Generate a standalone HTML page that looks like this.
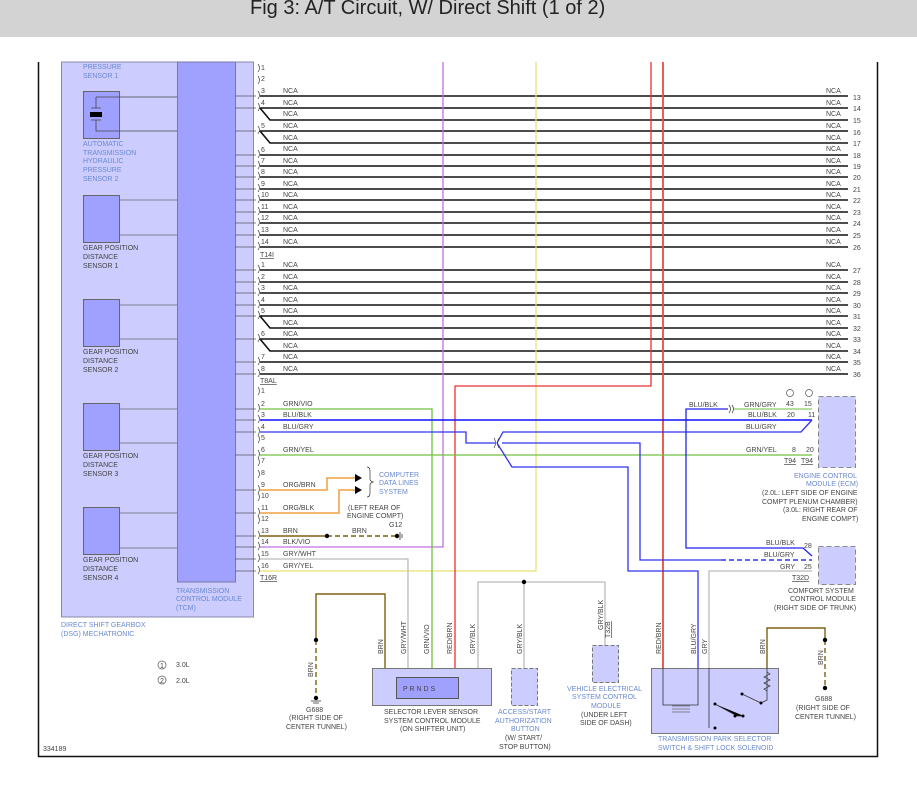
<!DOCTYPE html>
<html><head><meta charset="utf-8"><style>
html,body{margin:0;padding:0;background:#fff;}
body{width:917px;height:792px;overflow:hidden;position:relative;font-family:"Liberation Sans",sans-serif;}
#hdr{position:absolute;left:0;top:0;width:917px;height:37px;background:#d3d3d3;}
#hdr span{position:absolute;left:250px;top:-3px;font-size:20px;color:#222;}
svg{position:absolute;left:0;top:0;}
text{font-family:"Liberation Sans",sans-serif;font-size:7px;fill:#444;}
.b{fill:#6a8ad0;}
.p{fill:#777;font-size:7px;}
</style></head><body>
<div id="hdr"><span>Fig 3: A/T Circuit, W/ Direct Shift (1 of 2)</span></div>
<svg width="917" height="792" viewBox="0 0 917 792">
<!-- frame -->
<path d="M38.5 62 V756.5 H877.5 V62" fill="none" stroke="#111" stroke-width="1.5"/>
<!-- left panel -->
<rect x="61.5" y="62" width="192" height="555" fill="#ccccff" stroke="#8888aa"/>
<rect x="177.5" y="62" width="58" height="520" fill="#a0a0ff" stroke="#7777aa"/>
<line x1="253.5" y1="62" x2="253.5" y2="617" stroke="#8888aa"/>
<!-- sensors -->
<rect x="83.5" y="91.5" width="36" height="47" fill="#a0a0ff" stroke="#666"/>
<path d="M96 97 H177 M96 97 V108 M91 108 H101 M91 120 H101 M96 120 V131 H177" stroke="#444" fill="none" stroke-width="0.8"/>
<rect x="90" y="112" width="12" height="5" fill="#000"/>
<rect x="83.5" y="195.5" width="36" height="47" fill="#a0a0ff" stroke="#666"/>
<rect x="83.5" y="299.5" width="36" height="47" fill="#a0a0ff" stroke="#666"/>
<rect x="83.5" y="403.5" width="36" height="47" fill="#a0a0ff" stroke="#666"/>
<rect x="83.5" y="507.5" width="36" height="47" fill="#a0a0ff" stroke="#666"/>
<g stroke="#666" stroke-width="0.8">
<line x1="119" y1="200" x2="177" y2="200"/><line x1="119" y1="235" x2="177" y2="235"/>
<line x1="119" y1="305" x2="177" y2="305"/><line x1="119" y1="339" x2="177" y2="339"/>
<line x1="119" y1="409" x2="177" y2="409"/><line x1="119" y1="443" x2="177" y2="443"/>
<line x1="119" y1="513" x2="177" y2="513"/><line x1="119" y1="548" x2="177" y2="548"/>
</g>
<text class="b" x="83" y="69">PRESSURE</text><text class="b" x="83" y="78">SENSOR 1</text>
<text class="b" x="83" y="146">AUTOMATIC</text><text class="b" x="83" y="155">TRANSMISSION</text><text class="b" x="83" y="163">HYDRAULIC</text><text class="b" x="83" y="172">PRESSURE</text><text class="b" x="83" y="181">SENSOR 2</text>
<text x="83" y="250">GEAR POSITION</text><text x="83" y="259">DISTANCE</text><text x="83" y="268">SENSOR 1</text>
<text x="83" y="354">GEAR POSITION</text><text x="83" y="363">DISTANCE</text><text x="83" y="372">SENSOR 2</text>
<text x="83" y="458">GEAR POSITION</text><text x="83" y="467">DISTANCE</text><text x="83" y="476">SENSOR 3</text>
<text x="83" y="562">GEAR POSITION</text><text x="83" y="571">DISTANCE</text><text x="83" y="580">SENSOR 4</text>
<text class="b" x="176" y="593">TRANSMISSION</text><text class="b" x="176" y="601">CONTROL MODULE</text><text class="b" x="176" y="610">(TCM)</text>
<text class="b" x="61" y="627">DIRECT SHIFT GEARBOX</text><text class="b" x="61" y="636">(DSG) MECHATRONIC</text>
<!-- TCM outputs -->
<g stroke="#555" stroke-width="0.8" fill="none">
<path d="M235 96H256M235 108H256M235 131H256M235 155H256M235 166H256M235 177H256M235 189H256M235 200H256M235 212H256M235 223H256M235 235H256M235 247H256"/>
<path d="M235 270H256M235 282H256M235 293H256M235 305H256M235 316H256M235 339H256M235 362H256M235 374H256"/>
<path d="M235 409H256M235 420H256M235 432H256M235 455H256M235 490H256M235 513H256M235 536H256M235 547H256M235 559H256M235 571H256"/>
</g>
<!-- connector brackets -->
<g stroke="#444" stroke-width="0.7" fill="none">
<path d="M258 64q3 4 0 8M258 76q3 4 0 8M258 91q3 4 0 8M258 103q3 4 0 8M258 126q3 4 0 8M258 150q3 4 0 8M258 161q3 4 0 8M258 172q3 4 0 8M258 184q3 4 0 8M258 195q3 4 0 8M258 207q3 4 0 8M258 218q3 4 0 8M258 230q3 4 0 8M258 242q3 4 0 8"/>
<path d="M258 265q3 4 0 8M258 277q3 4 0 8M258 288q3 4 0 8M258 300q3 4 0 8M258 311q3 4 0 8M258 334q3 4 0 8M258 357q3 4 0 8M258 369q3 4 0 8"/>
<path d="M258 387q3 4 0 8M258 404q3 4 0 8M258 415q3 4 0 8M258 427q3 4 0 8M258 435q3 4 0 8M258 450q3 4 0 8M258 458q3 4 0 8M258 470q3 4 0 8M258 485q3 4 0 8M258 493q3 4 0 8M258 508q3 4 0 8M258 516q3 4 0 8M258 531q3 4 0 8M258 542q3 4 0 8M258 554q3 4 0 8M258 566q3 4 0 8"/>
</g>
<!-- NCA wires -->
<g stroke="#111" stroke-width="1.6" fill="none">
<path d="M260 96H848M260 108H848M260 108L270 120H848M260 131H848M260 131L270 143H848M260 155H848M260 166H848M260 177H848M260 189H848M260 200H848M260 212H848M260 223H848M260 235H848M260 247H848"/>
<path d="M260 270H848M260 282H848M260 293H848M260 305H848M260 316H848M260 316L270 328H848M260 339H848M260 339L270 351H848M260 362H848M260 374H848"/>
</g>
<g class="p">
<text x="261" y="70">1</text><text x="261" y="81">2</text><text x="261" y="93">3</text><text x="261" y="105">4</text><text x="261" y="128">5</text><text x="261" y="152">6</text><text x="261" y="163">7</text><text x="261" y="174">8</text><text x="261" y="186">9</text><text x="261" y="197">10</text><text x="261" y="209">11</text><text x="261" y="220">12</text><text x="261" y="232">13</text><text x="261" y="244">14</text>
<text x="261" y="267">1</text><text x="261" y="279">2</text><text x="261" y="290">3</text><text x="261" y="302">4</text><text x="261" y="313">5</text><text x="261" y="336">6</text><text x="261" y="359">7</text><text x="261" y="371">8</text>
<text x="261" y="393">1</text><text x="261" y="406">2</text><text x="261" y="417">3</text><text x="261" y="429">4</text><text x="261" y="440">5</text><text x="261" y="452">6</text><text x="261" y="463">7</text><text x="261" y="475">8</text><text x="261" y="487">9</text><text x="261" y="498">10</text><text x="261" y="510">11</text><text x="261" y="521">12</text><text x="261" y="533">13</text><text x="261" y="544">14</text><text x="261" y="556">15</text><text x="261" y="568">16</text>
</g>
<text x="260" y="257" text-decoration="underline">T14I</text>
<text x="260" y="383" text-decoration="underline">T8AL</text>
<text x="260" y="580" text-decoration="underline">T16R</text>
<g>
<text x="283" y="93">NCA</text><text x="283" y="105">NCA</text><text x="283" y="116">NCA</text><text x="283" y="128">NCA</text><text x="283" y="140">NCA</text><text x="283" y="151">NCA</text><text x="283" y="163">NCA</text><text x="283" y="174">NCA</text><text x="283" y="186">NCA</text><text x="283" y="197">NCA</text><text x="283" y="209">NCA</text><text x="283" y="220">NCA</text><text x="283" y="232">NCA</text><text x="283" y="244">NCA</text>
<text x="283" y="267">NCA</text><text x="283" y="279">NCA</text><text x="283" y="290">NCA</text><text x="283" y="302">NCA</text><text x="283" y="313">NCA</text><text x="283" y="325">NCA</text><text x="283" y="336">NCA</text><text x="283" y="348">NCA</text><text x="283" y="359">NCA</text><text x="283" y="371">NCA</text>
<text x="826" y="93">NCA</text><text x="826" y="105">NCA</text><text x="826" y="116">NCA</text><text x="826" y="128">NCA</text><text x="826" y="140">NCA</text><text x="826" y="151">NCA</text><text x="826" y="163">NCA</text><text x="826" y="174">NCA</text><text x="826" y="186">NCA</text><text x="826" y="197">NCA</text><text x="826" y="209">NCA</text><text x="826" y="220">NCA</text><text x="826" y="232">NCA</text><text x="826" y="244">NCA</text>
<text x="826" y="267">NCA</text><text x="826" y="279">NCA</text><text x="826" y="290">NCA</text><text x="826" y="302">NCA</text><text x="826" y="313">NCA</text><text x="826" y="325">NCA</text><text x="826" y="336">NCA</text><text x="826" y="348">NCA</text><text x="826" y="359">NCA</text><text x="826" y="371">NCA</text>
</g>
<g class="p">
<text x="853" y="100">13</text><text x="853" y="111">14</text><text x="853" y="123">15</text><text x="853" y="135">16</text><text x="853" y="146">17</text><text x="853" y="158">18</text><text x="853" y="169">19</text><text x="853" y="180">20</text><text x="853" y="192">21</text><text x="853" y="203">22</text><text x="853" y="215">23</text><text x="853" y="226">24</text><text x="853" y="238">25</text><text x="853" y="250">26</text>
<text x="853" y="273">27</text><text x="853" y="285">28</text><text x="853" y="296">29</text><text x="853" y="308">30</text><text x="853" y="319">31</text><text x="853" y="331">32</text><text x="853" y="342">33</text><text x="853" y="354">34</text><text x="853" y="365">35</text><text x="853" y="377">36</text>
</g>
<!-- vertical colored wires -->
<path d="M443 62V547H260" stroke="#c070e0" stroke-width="1.3" fill="none"/>
<path d="M536 62V571H260" stroke="#e8e070" stroke-width="1.2" fill="none"/>
<path d="M651 62V386H455V668" stroke="#ee3030" stroke-width="1.3" fill="none"/>
<path d="M663 62V668" stroke="#ee4a40" stroke-width="1.8" fill="none"/>
<!-- T16R wires -->
<path d="M260 409H432V668" stroke="#70c040" stroke-width="1.3" fill="none"/>
<path d="M260 559H408V668" stroke="#bbb" stroke-width="1.3" fill="none"/>
<path d="M260 455H812" stroke="#70c040" stroke-width="1.3" fill="none"/>
<path d="M260 420H812" stroke="#1010ff" stroke-width="1.4" fill="none"/>
<path d="M260 432H466V443H495M497 443L503 432H801L812 420M502 443H640V560H721" stroke="#3333ee" stroke-width="1.3" fill="none"/>
<path d="M497 443L512 467H628V571H698V668" stroke="#3333ee" stroke-width="1.3" fill="none"/>
<path d="M721 560H812" stroke="#3333ee" stroke-width="1.5" stroke-dasharray="5,3" fill="none"/>
<path d="M686 420V548H803L812 556M686 420V409H728" stroke="#2222ee" stroke-width="1.3" fill="none"/>
<path d="M734 409H812" stroke="#88cc60" stroke-width="1.3" fill="none"/>
<path d="M729 405q3 4 0 8M732 405q3 4 0 8M494 438q3 5 0 10M499 438q-3 5 0 10" stroke="#333" stroke-width="0.7" fill="none"/>
<path d="M709 668V571H812" stroke="#bbb" stroke-width="1.3" fill="none"/>
<path d="M260 490H327V478H355M260 513H339V490H355" stroke="#f0a040" stroke-width="1.5" fill="none"/>
<path d="M355 474L362 478L355 482ZM355 486L362 490L355 494Z" fill="#000"/>
<path d="M367 467q3 0 3 4v8q0 2 3 3q-3 1-3 3v8q0 4-3 4" stroke="#333" stroke-width="0.7" fill="none"/>
<path d="M260 536H327" stroke="#806010" stroke-width="1.4"/>
<path d="M327 536H397" stroke="#806010" stroke-width="1.4" stroke-dasharray="5,3"/>
<circle cx="327" cy="536" r="2.2" fill="#000"/><circle cx="397" cy="536" r="2.2" fill="#000"/>
<path d="M400 532V540M402 534V538" stroke="#333" stroke-width="0.8"/>
<text x="283" y="406">GRN/VIO</text><text x="283" y="417">BLU/BLK</text><text x="283" y="429">BLU/GRY</text><text x="283" y="452">GRN/YEL</text><text x="283" y="487">ORG/BRN</text><text x="283" y="510">ORG/BLK</text><text x="283" y="533">BRN</text><text x="283" y="544">BLK/VIO</text><text x="283" y="556">GRY/WHT</text><text x="283" y="568">GRY/YEL</text>
<text x="352" y="533">BRN</text><text x="389" y="527">G12</text>
<text class="b" x="379" y="477">COMPUTER</text><text class="b" x="379" y="485">DATA LINES</text><text class="b" x="379" y="494">SYSTEM</text>
<text x="348" y="510">(LEFT REAR OF</text><text x="347" y="518">ENGINE COMPT)</text>
<!-- legend -->
<circle cx="162" cy="665" r="4" fill="none" stroke="#555" stroke-width="0.7"/><text x="160" y="668" font-size="6">1</text><text x="176" y="667">3.0L</text>
<circle cx="162" cy="680" r="4" fill="none" stroke="#555" stroke-width="0.7"/><text x="160" y="683" font-size="6">2</text><text x="176" y="683">2.0L</text>
<text x="43" y="751" font-size="6.5">334189</text>
<!-- left ground -->
<path d="M316 640V594H385V668" stroke="#806010" stroke-width="1.4" fill="none"/>
<path d="M316 640V698" stroke="#806010" stroke-width="1.4" stroke-dasharray="5,3"/>
<circle cx="316" cy="640" r="2.2" fill="#000"/><circle cx="316" cy="698" r="2.2" fill="#000"/>
<path d="M311 701H321M313 703H319" stroke="#333" stroke-width="0.7"/>
<text x="306" y="712">G688</text><text x="289" y="720">(RIGHT SIDE OF</text><text x="286" y="729">CENTER TUNNEL)</text>
<text transform="translate(313,677) rotate(-90)">BRN</text>
<!-- selector -->
<rect x="372.5" y="668.5" width="119" height="37" fill="#ccccff" stroke="#777"/>
<rect x="396.5" y="677.5" width="62" height="21" fill="#a0a0ff" stroke="#555"/>
<text x="403" y="691" font-size="6" fill="#333">P  R  N  D  S</text>
<text x="384" y="714">SELECTOR LEVER SENSOR</text><text x="384" y="723">SYSTEM CONTROL MODULE</text><text x="400" y="731">(ON SHIFTER UNIT)</text>
<path d="M478 668V582H605V645M524 582V668" stroke="#bbb" stroke-width="1.3" fill="none"/>
<circle cx="524" cy="582" r="2.2" fill="#000"/>
<g font-size="6.5">
<text transform="translate(383,654) rotate(-90)">BRN</text><text transform="translate(406,654) rotate(-90)">GRY/WHT</text><text transform="translate(429,654) rotate(-90)">GRN/VIO</text><text transform="translate(452,654) rotate(-90)">RED/BRN</text><text transform="translate(475,654) rotate(-90)">GRY/BLK</text><text transform="translate(522,654) rotate(-90)">GRY/BLK</text><text transform="translate(603,630) rotate(-90)">GRY/BLK</text>
<text transform="translate(661,654) rotate(-90)">RED/BRN</text><text transform="translate(696,654) rotate(-90)">BLU/GRY</text><text transform="translate(707,654) rotate(-90)">GRY</text><text transform="translate(765,654) rotate(-90)">BRN</text><text transform="translate(823,665) rotate(-90)">BRN</text>
</g>
<rect x="511.5" y="668.5" width="26" height="37" fill="#ccccff" stroke="#777" stroke-dasharray="4,2"/>
<text class="b" x="498" y="714">ACCESS/START</text><text class="b" x="495" y="723">AUTHORIZATION</text><text class="b" x="511" y="731">BUTTON</text><text x="505" y="740">(W/ START/</text><text x="499" y="749">STOP BUTTON)</text>
<rect x="592.5" y="645.5" width="26" height="37" fill="#ccccff" stroke="#777" stroke-dasharray="4,2"/>
<text x="610" y="638" transform="rotate(-90,610,638)" text-decoration="underline">T32B</text>
<text class="b" x="567" y="691">VEHICLE ELECTRICAL</text><text class="b" x="572" y="699">SYSTEM CONTROL</text><text class="b" x="591" y="708">MODULE</text><text x="581" y="717">(UNDER LEFT</text><text x="580" y="725">SIDE OF DASH)</text>
<!-- park selector -->
<rect x="651.5" y="668.5" width="127" height="65" fill="#ccccff" stroke="#777"/>
<path d="M663 668V705H698V668M709 668V728M767 668V700L761 703" stroke="#333" stroke-width="0.8" fill="none"/>
<path d="M672 706H690M672 709H690M672 712H690" stroke="#333" stroke-width="0.6"/>
<path d="M767 672l3 2-6 3 6 3-6 3 6 3-6 3 3 2" stroke="#333" stroke-width="0.7" fill="none"/>
<path d="M715 704L737 716H744M742 694L761 703" stroke="#333" stroke-width="0.8"/>
<circle cx="715" cy="704" r="1.5"/><circle cx="735" cy="716" r="1.5"/><circle cx="743" cy="716" r="1.5"/><circle cx="742" cy="694" r="1.5"/><circle cx="761" cy="703" r="1.5"/><circle cx="715" cy="728" r="1.5"/>
<text class="b" x="658" y="741">TRANSMISSION PARK SELECTOR</text><text class="b" x="658" y="750">SWITCH &amp; SHIFT LOCK SOLENOID</text>
<path d="M767 668V628H825V640" stroke="#806010" stroke-width="1.4" fill="none"/>
<path d="M825 640V688" stroke="#806010" stroke-width="1.4" stroke-dasharray="5,3"/>
<circle cx="825" cy="640" r="2.2" fill="#000"/><circle cx="825" cy="688" r="2.2" fill="#000"/>
<text x="815" y="701">G688</text><text x="796" y="710">(RIGHT SIDE OF</text><text x="795" y="719">CENTER TUNNEL)</text>
<!-- ECM -->
<rect x="818.5" y="396.5" width="37" height="71" fill="#ccccff" stroke="#888" stroke-dasharray="5,3"/>
<circle cx="790" cy="393" r="3.5" fill="none" stroke="#555" stroke-width="0.7"/><circle cx="809" cy="393" r="3.5" fill="none" stroke="#555" stroke-width="0.7"/>
<text x="744" y="407">GRN/GRY</text><text x="786" y="406">43</text><text x="804" y="406">15</text>
<text x="689" y="407">BLU/BLK</text>
<text x="748" y="417">BLU/BLK</text><text x="787" y="417">20</text><text x="808" y="417">11</text>
<text x="746" y="429">BLU/GRY</text>
<text x="746" y="452">GRN/YEL</text><text x="792" y="452">8</text><text x="806" y="452">20</text>
<text x="784" y="463" text-decoration="underline">T94</text><text x="801" y="463" text-decoration="underline">T94</text>
<text class="b" x="794" y="478">ENGINE CONTROL</text><text class="b" x="806" y="486">MODULE (ECM)</text>
<text x="762" y="495">(2.0L: LEFT SIDE OF ENGINE</text><text x="762" y="504">COMPT PLENUM CHAMBER)</text><text x="783" y="512">(3.0L: RIGHT REAR OF</text><text x="802" y="521">ENGINE COMPT)</text>
<rect x="818.5" y="546.5" width="37" height="38" fill="#ccccff" stroke="#888" stroke-dasharray="5,3"/>
<text x="766" y="545">BLU/BLK</text><text x="804" y="548">28</text><text x="764" y="557">BLU/GRY</text><text x="780" y="569">GRY</text><text x="804" y="569">25</text>
<text x="792" y="580" text-decoration="underline">T32D</text>
<text x="788" y="593">COMFORT SYSTEM</text><text x="790" y="601">CONTROL MODULE</text><text x="774" y="610">(RIGHT SIDE OF TRUNK)</text>
</svg>
</body></html>
